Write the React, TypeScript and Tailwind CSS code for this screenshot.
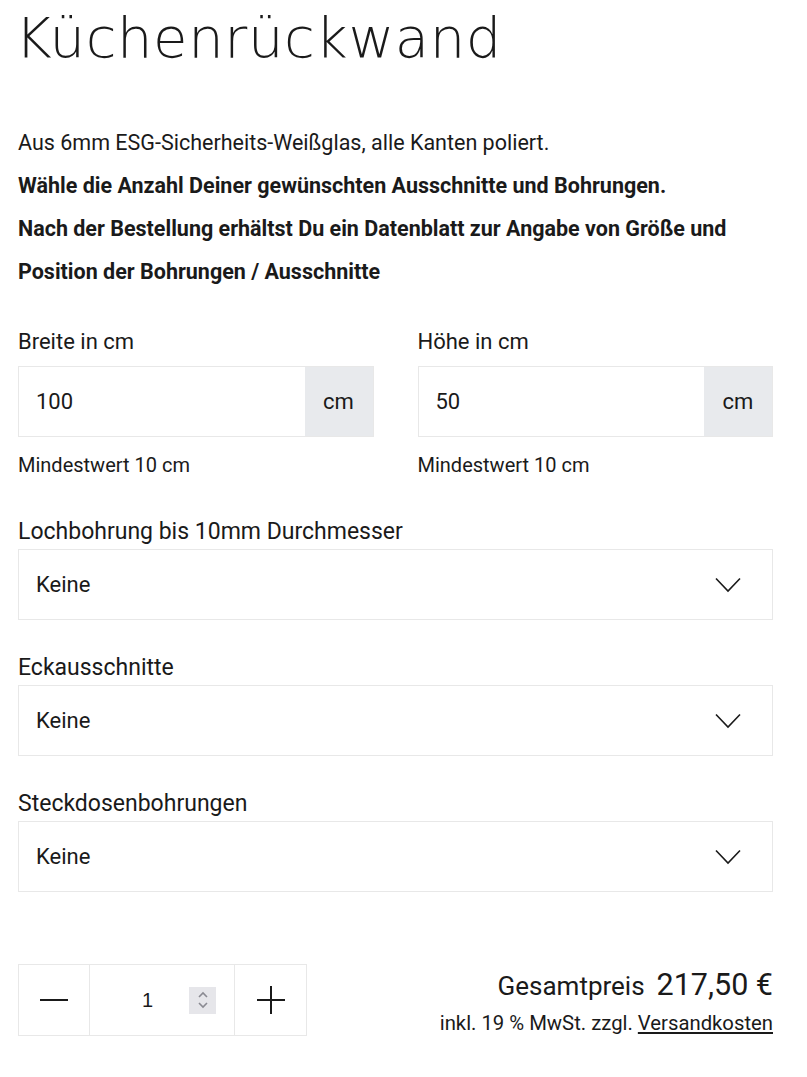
import React from "react";

type SelectProps = {
  label: string;
  value: string;
};

type DimProps = {
  label: string;
  value: string;
};

const Chevron = () => (
  <svg width="26" height="16" viewBox="0 0 26 16" fill="none">
    <path d="M1 1.5 L13 14 L25 1.5" stroke="#1a1a1a" strokeWidth="1.6" />
  </svg>
);

const DimInput = (props: DimProps) => {
  return (
    <div className="flex flex-col">
      <label className="text-[22px] leading-[28px]">{props.label}</label>
      <div className="mt-[10px] flex h-[71px] border border-[#e8e8e8]">
        <div className="flex flex-1 items-center pl-[17px] text-[22px]">{props.value}</div>
        <div className="flex w-[68px] items-center justify-center bg-[#e8eaed] text-[22px]">
          cm
        </div>
      </div>
      <p className="mt-[15px] text-[20px] leading-[26px]">Mindestwert 10 cm</p>
    </div>
  );
};

const SelectField = (props: SelectProps) => {
  return (
    <div className="flex flex-col">
      <label className="text-[23px] leading-[28px]">{props.label}</label>
      <div className="mt-[3px] flex h-[71px] items-center justify-between border border-[#e8e8e8] pl-[17px] pr-[31px]">
        <span className="text-[22px]">{props.value}</span>
        <Chevron />
      </div>
    </div>
  );
};

const App = () => {
  const selects = [
    { label: "Lochbohrung bis 10mm Durchmesser", value: "Keine" },
    { label: "Eckausschnitte", value: "Keine" },
    { label: "Steckdosenbohrungen", value: "Keine" },
  ];

  return (
    <div
      className="w-[807px] bg-white px-[18px] pb-10 text-[#1a1a1a]"
      style={{ fontFamily: "Roboto, 'Noto Sans', sans-serif" }}
    >
      <h1
        className="-ml-[3px] pt-[2px] text-[56px] font-light leading-[72px] tracking-[0.6px]"
        style={{ fontFamily: "'DejaVu Sans', sans-serif" }}
      >
        Küchenrückwand
      </h1>

      <div className="mt-[47px] text-[21.5px] leading-[43px]">
        <p>Aus 6mm ESG-Sicherheits-Weißglas, alle Kanten poliert.</p>
        <p className="font-bold">Wähle die Anzahl Deiner gewünschten Ausschnitte und Bohrungen.</p>
        <p className="font-bold">
          Nach der Bestellung erhältst Du ein Datenblatt zur Angabe von Größe und
          <br />
          Position der Bohrungen / Ausschnitte
        </p>
      </div>

      <div className="mt-[35px] grid grid-cols-2 gap-[44px] pr-[16px]">
        <DimInput label="Breite in cm" value="100" />
        <DimInput label="Höhe in cm" value="50" />
      </div>

      <div className="mt-[40px] flex flex-col gap-[34px] pr-[16px]">
        {selects.map((s, i) => (
          <SelectField key={i} label={s.label} value={s.value} />
        ))}
      </div>

      <div className="mt-[72px] flex items-start justify-between pr-[16px]">
        <div className="flex h-[72px] border border-[#e8e8e8]">
          <div className="flex w-[71px] items-center justify-center border-r border-[#e8e8e8]">
            <div className="h-[2px] w-[28px] bg-[#1a1a1a]" />
          </div>
          <div className="flex w-[145px] items-center border-r border-[#e8e8e8] pl-[52px]">
            <span className="text-[20px]" style={{ fontFamily: "'Liberation Sans', sans-serif" }}>
              1
            </span>
            <div className="ml-[36px] flex h-[27px] w-[27px] items-center justify-center bg-[#e6e6ea]">
              <svg width="12" height="20" viewBox="0 0 12 20" fill="none">
                <path d="M2 7 L6 3 L10 7" stroke="#8a8a92" strokeWidth="1.6" />
                <path d="M2 13 L6 17 L10 13" stroke="#8a8a92" strokeWidth="1.6" />
              </svg>
            </div>
          </div>
          <div className="relative flex w-[71px] items-center justify-center">
            <div className="h-[2px] w-[28px] bg-[#1a1a1a]" />
            <div className="absolute h-[28px] w-[2px] bg-[#1a1a1a]" />
          </div>
        </div>

        <div className="-mt-[2px] flex flex-col items-end">
          <div className="flex items-baseline">
            <span className="text-[26px]">Gesamtpreis</span>
            <span className="ml-[12px] text-[30.5px]">217,50 €</span>
          </div>
          <p className="text-[20.3px]">
            inkl. 19 % MwSt. zzgl. <span className="underline underline-offset-2">Versandkosten</span>
          </p>
        </div>
      </div>
    </div>
  );
};

export default App;
